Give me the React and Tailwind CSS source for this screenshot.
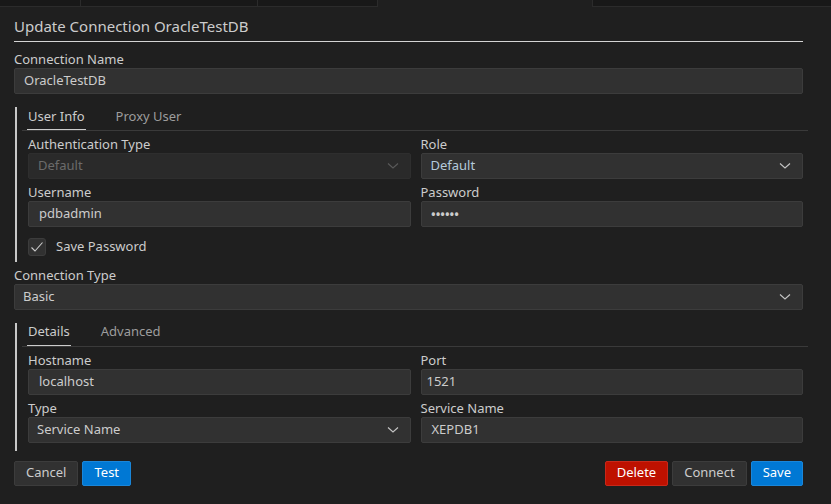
import React from "react";

const font = { fontFamily: '"Noto Sans", "Open Sans", sans-serif' };

function Chevron({ color = "#c5c5c5" }) {
  return (
    <svg width="12" height="8" viewBox="0 0 12 8" className="shrink-0">
      <path d="M1 1.5 L6 6 L11 1.5" fill="none" stroke={color} strokeWidth="1.1" />
    </svg>
  );
}

function Label({ children }) {
  return <div className="text-[13px] leading-[17px] text-[#cccccc]">{children}</div>;
}

function Input({ value, className = "" }) {
  return (
    <div className={"h-[26px] flex items-center bg-[#313131] border border-[#3c3c3c] rounded-[2px] text-[13px] text-[#cccccc] " + className}>
      {value}
    </div>
  );
}

function Select({ value, disabled, valueClass = "text-[#cccccc]", className = "" }) {
  return (
    <div
      className={
        "h-[26px] flex items-center justify-between border rounded-[2px] text-[13px] pr-[11px] " +
        (disabled ? "bg-[#2a2a2a] border-[#2e2e2e] text-[#6b6b6b] " : "bg-[#313131] border-[#3c3c3c] " + valueClass + " ") +
        className
      }
    >
      <span>{value}</span>
      <Chevron color={disabled ? "#5a5a5a" : "#c5c5c5"} />
    </div>
  );
}

function Tabs({ items, gap }) {
  return (
    <div className={"h-[24px] flex items-start border-b border-[#3a3a3a] pl-[5px] " + gap}>
      {items.map((t, i) => (
        <div
          key={t}
          className={
            "h-[23px] px-[1px] pb-[3px] flex items-center text-[13px] border-b " +
            (i === 0 ? "text-[#cccccc] border-[#cccccc]" : "text-[#9d9d9d] border-transparent")
          }
        >
          {t}
        </div>
      ))}
    </div>
  );
}

function Field({ label, children, className = "" }) {
  return (
    <div className={"flex flex-col " + className}>
      <div className="h-[22px] flex items-end">
        <Label>{label}</Label>
      </div>
      {children}
    </div>
  );
}

function Button({ children, variant }) {
  const cls = {
    gray: "bg-[#313131] border-[#3c3c3c] text-[#cccccc]",
    blue: "bg-[#0078d4] border-[#1a86d9] text-white",
    red: "bg-[#be1100] border-[#c8281a] text-white",
  }[variant];
  return (
    <div className={"h-[25px] flex items-center px-[11px] border rounded-[2px] text-[13px] " + cls}>
      {children}
    </div>
  );
}

export default function App() {
  return (
    <div className="w-[831px] h-[504px] bg-[#1f1f1f] overflow-hidden" style={font}>
      {/* top editor tab strip */}
      <div className="h-[7px] flex">
        <div className="w-[81px] bg-[#181818] border-b border-[#2b2b2b] border-r border-r-[#2b2b2b]" />
        <div className="w-[177px] bg-[#181818] border-b border-[#2b2b2b] border-r border-r-[#2b2b2b]" />
        <div className="w-[120px] bg-[#181818] border-b border-[#2b2b2b] border-r border-r-[#2b2b2b]" />
        <div className="w-[214px] bg-[#1f1f1f]" />
        <div className="flex-1 bg-[#181818] border-b border-[#2b2b2b] border-l border-l-[#2b2b2b]" />
      </div>

      <div className="pl-[14px] pr-[28px]">
        {/* header */}
        <div className="h-[35px] flex items-end pb-[5px] border-b border-[#d4d4d4]">
          <span className="text-[15px] leading-[20px] text-[#cccccc]">Update Connection OracleTestDB</span>
        </div>

        <Field label="Connection Name" className="mt-[4px]">
          <Input value="OracleTestDB" className="pl-[9px]" />
        </Field>

        {/* User info group */}
        <div className="mt-[13px] ml-[1px] mr-[-5px] border-l-2 border-[#c8c8c8] pl-[5px] pb-[5px]">
          <Tabs items={["User Info", "Proxy User"]} gap="gap-[29px]" />
          <div className="pl-[6px] pr-[5px] grid grid-cols-2 gap-x-[10px]">
            <Field label="Authentication Type">
              <Select value="Default" disabled className="pl-[9px]" />
            </Field>
            <Field label="Role">
              <Select value="Default" valueClass="text-[#b4cadb]" className="pl-[9px]" />
            </Field>
            <Field label="Username">
              <Input value="pdbadmin" className="pl-[10px]" />
            </Field>
            <Field label="Password">
              <Input value="••••••" className="pl-[9px] text-[15px] tracking-[-1px]" />
            </Field>
          </div>
          <div className="pl-[6px] mt-[10px] flex items-center gap-[10px]">
            <div className="w-[18px] h-[18px] rounded-[3px] bg-[#313131] border border-[#3c3c3c] flex items-center justify-center">
              <svg width="14" height="14" viewBox="0 0 14 14">
                <path d="M1.5 7.5 L5 11 L12.5 2.5" fill="none" stroke="#cccccc" strokeWidth="1.1" />
              </svg>
            </div>
            <span className="text-[13px] text-[#cccccc]">Save Password</span>
          </div>
        </div>

        <Field label="Connection Type">
          <Select value="Basic" className="pl-[8px]" />
        </Field>

        {/* Details group */}
        <div className="mt-[13px] ml-[1px] mr-[-5px] border-l-2 border-[#c8c8c8] pl-[5px] pb-[8px]">
          <Tabs items={["Details", "Advanced"]} gap="gap-[29px]" />
          <div className="pl-[6px] pr-[5px] grid grid-cols-2 gap-x-[10px]">
            <Field label="Hostname">
              <Input value="localhost" className="pl-[10px]" />
            </Field>
            <Field label="Port">
              <Input value="1521" className="pl-[5px]" />
            </Field>
            <Field label="Type">
              <Select value="Service Name" className="pl-[8px]" />
            </Field>
            <Field label="Service Name">
              <Input value="XEPDB1" className="pl-[10px]" />
            </Field>
          </div>
        </div>

        {/* buttons */}
        <div className="mt-[10px] flex items-center justify-between">
          <div className="flex gap-[4px]">
            <Button variant="gray">Cancel</Button>
            <Button variant="blue">Test</Button>
          </div>
          <div className="flex gap-[4px]">
            <Button variant="red">Delete</Button>
            <Button variant="gray">Connect</Button>
            <Button variant="blue">Save</Button>
          </div>
        </div>
      </div>
    </div>
  );
}
